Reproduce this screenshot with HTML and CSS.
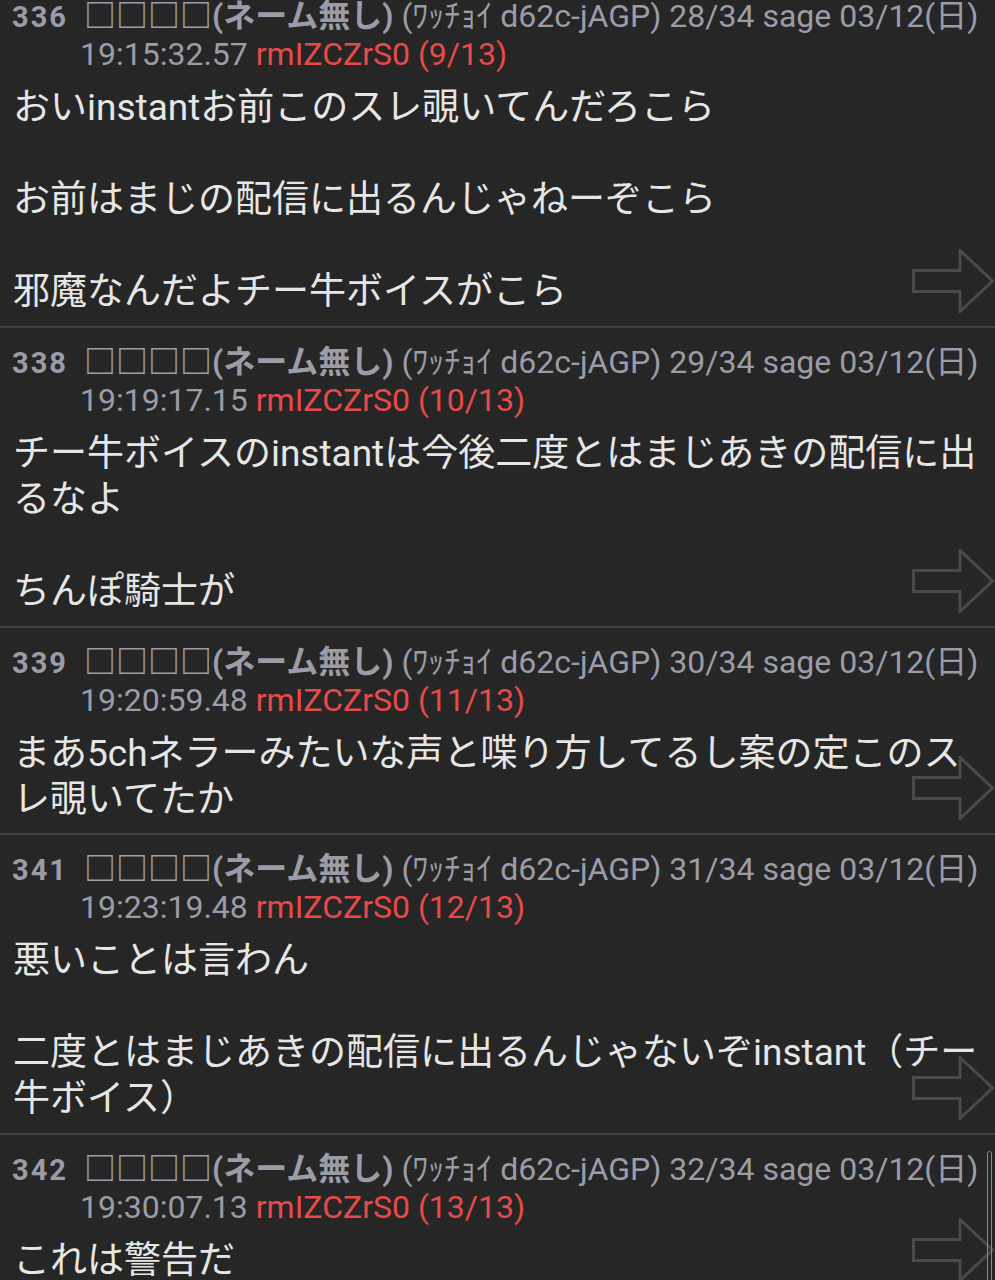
FILE: index.html
```html
<!DOCTYPE html>
<html lang="ja">
<head>
<meta charset="utf-8">
<title>スレッド</title>
<link rel="stylesheet" href="styles.css">
</head>
<body>
<div class="thread">
  <article class="post">
    <div class="head">
      <span class="num">336</span>
      <div class="info">
        <div class="line"><b class="name">□□□□(ネーム無し)</b> (ﾜｯﾁｮｲ d62c-jAGP) 28/34 sage 03/12(日)</div>
        <div class="line">19:15:32.57 <span class="id">rmIZCZrS0 (9/13)</span></div>
      </div>
    </div>
    <div class="body">おいinstantお前このスレ覗いてんだろこら<br><br>お前はまじの配信に出るんじゃねーぞこら<br><br>邪魔なんだよチー牛ボイスがこら</div>
    <svg class="arrow" width="82" height="64" viewBox="0 0 82 64"><polygon points="1.5,21.5 48,21.5 48,1.5 80.5,32 48,62.5 48,42.5 1.5,42.5"/></svg>
  </article>
  <article class="post">
    <div class="head">
      <span class="num">338</span>
      <div class="info">
        <div class="line"><b class="name">□□□□(ネーム無し)</b> (ﾜｯﾁｮｲ d62c-jAGP) 29/34 sage 03/12(日)</div>
        <div class="line">19:19:17.15 <span class="id">rmIZCZrS0 (10/13)</span></div>
      </div>
    </div>
    <div class="body">チー牛ボイスのinstantは今後二度とはまじあきの配信に出<br>るなよ<br><br>ちんぽ騎士が</div>
    <svg class="arrow" width="82" height="64" viewBox="0 0 82 64"><polygon points="1.5,21.5 48,21.5 48,1.5 80.5,32 48,62.5 48,42.5 1.5,42.5"/></svg>
  </article>
  <article class="post short">
    <div class="head">
      <span class="num">339</span>
      <div class="info">
        <div class="line"><b class="name">□□□□(ネーム無し)</b> (ﾜｯﾁｮｲ d62c-jAGP) 30/34 sage 03/12(日)</div>
        <div class="line">19:20:59.48 <span class="id">rmIZCZrS0 (11/13)</span></div>
      </div>
    </div>
    <div class="body">まあ5chネラーみたいな声と喋り方してるし案の定このス<br>レ覗いてたか</div>
    <svg class="arrow" width="82" height="64" viewBox="0 0 82 64"><polygon points="1.5,21.5 48,21.5 48,1.5 80.5,32 48,62.5 48,42.5 1.5,42.5"/></svg>
  </article>
  <article class="post">
    <div class="head">
      <span class="num">341</span>
      <div class="info">
        <div class="line"><b class="name">□□□□(ネーム無し)</b> (ﾜｯﾁｮｲ d62c-jAGP) 31/34 sage 03/12(日)</div>
        <div class="line">19:23:19.48 <span class="id">rmIZCZrS0 (12/13)</span></div>
      </div>
    </div>
    <div class="body">悪いことは言わん<br><br>二度とはまじあきの配信に出るんじゃないぞinstant（チー<br>牛ボイス）</div>
    <svg class="arrow" width="82" height="64" viewBox="0 0 82 64"><polygon points="1.5,21.5 48,21.5 48,1.5 80.5,32 48,62.5 48,42.5 1.5,42.5"/></svg>
  </article>
  <article class="post">
    <div class="head">
      <span class="num">342</span>
      <div class="info">
        <div class="line"><b class="name">□□□□(ネーム無し)</b> (ﾜｯﾁｮｲ d62c-jAGP) 32/34 sage 03/12(日)</div>
        <div class="line">19:30:07.13 <span class="id">rmIZCZrS0 (13/13)</span></div>
      </div>
    </div>
    <div class="body">これは警告だ</div>
    <svg class="arrow" width="82" height="64" viewBox="0 0 82 64"><polygon points="1.5,21.5 48,21.5 48,1.5 80.5,32 48,62.5 48,42.5 1.5,42.5"/></svg>
  </article>
</div>
<div class="scrollbar"></div>
</body>
</html>
```
FILE: styles.css
```css
html, body {
  margin: 0;
  padding: 0;
  background: #262626;
  overflow: hidden;
}
body {
  width: 995px;
  height: 1280px;
  position: relative;
  font-family: Roboto, "Noto Sans CJK JP", sans-serif;
  color: #e6e6e6;
}
.thread {
  margin-top: -20px;
}
.post {
  position: relative;
  border-top: 2px solid #404040;
  padding: 15px 4px 11px 12px;
}
.post.short {
  padding-bottom: 10px;
}
.head {
  display: flex;
  align-items: baseline;
  color: #9c9ca9;
  font-size: 32px;
  line-height: 38px;
  white-space: nowrap;
}
.num {
  flex: 0 0 68px;
  font-size: 29px;
  font-weight: 700;
  letter-spacing: 2px;
}
.name {
  font-weight: 700;
}
.info .name {
  margin-left: 4px;
}
.id {
  color: #e84a4a;
}
.body {
  margin-top: 12px;
  font-size: 37px;
  line-height: 46px;
  white-space: nowrap;
  padding-left: 1px;
}
.arrow {
  position: absolute;
  right: 1px;
  bottom: 13px;
  fill: none;
  stroke: #4a4a4a;
  stroke-width: 3;
  stroke-linejoin: miter;
}
.scrollbar {
  position: absolute;
  right: 3px;
  top: 1151px;
  width: 3px;
  height: 200px;
  border: 1.5px solid #8a8a8a;
  border-radius: 4px;
}
```
